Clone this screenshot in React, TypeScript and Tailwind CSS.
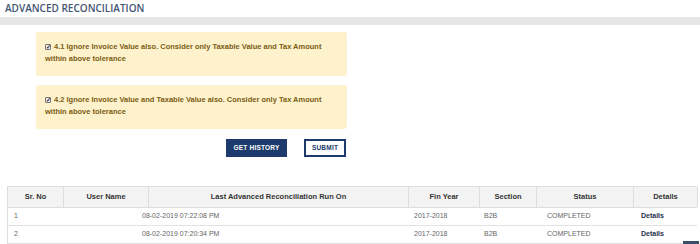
import { Fragment } from "react";

const OPTIONS = [
  {
    id: "4.1",
    line1: "4.1 Ignore Invoice Value also. Consider only Taxable Value and Tax Amount",
    line2: "within above tolerance",
  },
  {
    id: "4.2",
    line1: "4.2 Ignore Invoice Value and Taxable Value also. Consider only Tax Amount",
    line2: "within above tolerance",
  },
];

const HEADERS = ["Sr. No", "User Name", "Last Advanced Reconciliation Run On", "Fin Year", "Section", "Status", "Details"];

const ROWS = [
  { sr: "1", user: "", runOn: "08-02-2019 07:22:08 PM", year: "2017-2018", section: "B2B", status: "COMPLETED" },
  { sr: "2", user: "", runOn: "08-02-2019 07:20:34 PM", year: "2017-2018", section: "B2B", status: "COMPLETED" },
];

// header and body columns don't line up exactly in the original
const HEAD_COLS = "grid-cols-[56px_85px_260px_71px_57px_97px_64px]";
const BODY_COLS = "grid-cols-[56px_78px_267px_71px_57px_97px_64px]";

function OptionBox({ line1, line2 }: { line1: string; line2: string }) {
  return (
    <div className="ml-[36px] w-[311px] h-[44px] rounded-[3px] bg-[#fef2cd] pl-[9px] pt-[9px] text-[7.5px] leading-[12px] font-bold text-[#7a5c12]">
      <div className="flex items-center">
        <span className="mr-[2px] flex h-[6px] w-[6px] items-center justify-center rounded-[1px] border border-[#777] bg-[#eee] text-[6px] leading-none text-[#222]">
          ✓
        </span>
        <span className="ml-[1px]">{line1}</span>
      </div>
      <div>{line2}</div>
    </div>
  );
}

export default function App() {
  return (
    <div className="relative h-[244px] w-[700px] overflow-hidden bg-white" style={{ fontFamily: '"Liberation Sans", Arial, sans-serif' }}>
      <div className="pl-[5px] pt-[2px] h-[17px] text-[10px] leading-[13px] font-semibold tracking-[0px] text-[#3f5573]" style={{ fontFamily: '"Open Sans", sans-serif' }}>
        ADVANCED RECONCILIATION
      </div>
      <div className="h-[8px] bg-[#e6e6e6]" />

      <div className="mt-[7px] flex flex-col gap-[9px]">
        {OPTIONS.map((o) => (
          <OptionBox key={o.id} line1={o.line1} line2={o.line2} />
        ))}
      </div>

      <div className="mt-[10px] flex pl-[226px] gap-[17px] text-[6.5px] font-bold tracking-[0.2px]">
        <button className="h-[18px] w-[61px] bg-[#1c3a6b] text-white">GET HISTORY</button>
        <button className="h-[18px] w-[42px] border-2 border-[#1c3a6b] bg-white text-[#1c3a6b]">SUBMIT</button>
      </div>

      <div className="ml-[7px] mt-[29px] w-[690px] border-l border-[#ddd] text-[7px]">
        <div className={`grid ${HEAD_COLS} h-[22px] border-y border-[#ddd] bg-[#f3f3f3] font-bold text-[7.5px] text-[#333]`}>
          {HEADERS.map((h) => (
            <div key={h} className="flex items-center justify-center border-r border-[#ddd]">
              {h}
            </div>
          ))}
        </div>
        {ROWS.map((r) => (
          <div key={r.sr} className={`grid ${BODY_COLS} h-[18px] items-center border-b border-[#e3e3e3] text-[#666]`}>
            <Fragment>
              <div className="pl-[6px]">{r.sr}</div>
              <div className="pl-[6px]">{r.user}</div>
              <div>{r.runOn}</div>
              <div className="pl-[5px]">{r.year}</div>
              <div className="pl-[4px]">{r.section}</div>
              <div className="pl-[10px]">{r.status}</div>
              <div className="pl-[7px] font-bold text-[#1f2f4d]">Details</div>
            </Fragment>
          </div>
        ))}
      </div>

      <div className="absolute bottom-0 right-[1px] h-[3px] w-[16px] bg-[#3b4e68]" />
    </div>
  );
}
